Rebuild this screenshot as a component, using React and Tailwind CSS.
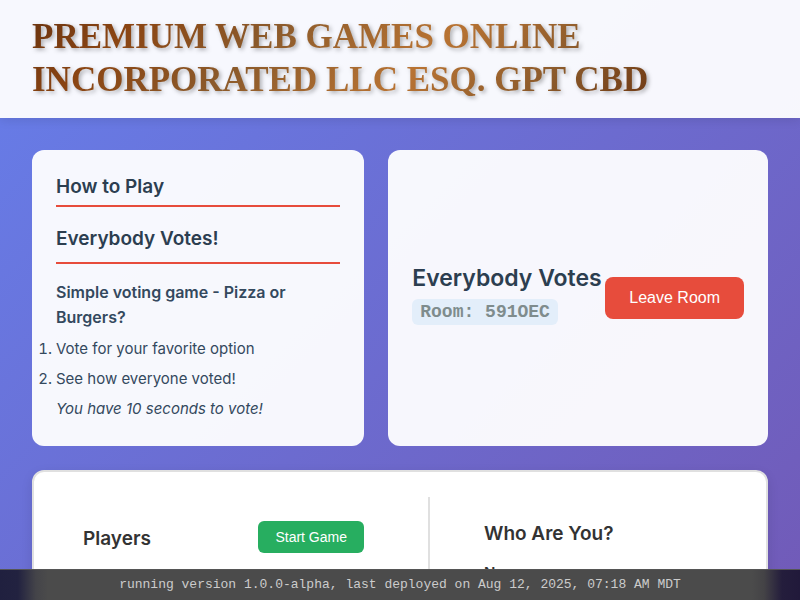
function HowToPlay() {
  return (
    <section className="rounded-xl bg-white/95 px-6 pt-6 pb-[25px] text-[15px] leading-[25px] text-[#34495e]">
      <h2 className="border-b-2 border-[#e74c3c] pb-1.5 text-[19px] leading-[25px] font-semibold text-[#2c3e50]">
        How to Play
      </h2>
      <h3 className="mt-5 border-b-2 border-[#e74c3c] pb-[11px] text-[19px] leading-6 font-semibold text-[#2c3e50]">
        Everybody Votes!
      </h3>
      <p className="mt-4 text-base leading-[25px] font-semibold">Simple voting game - Pizza or Burgers?</p>
      <ol className="mt-1.5 flex list-decimal flex-col gap-[5px]">
        <li>Vote for your favorite option</li>
        <li>See how everyone voted!</li>
      </ol>
      <p className="mt-[5px] italic">You have 10 seconds to vote!</p>
    </section>
  );
}

function RoomHeader() {
  return (
    <section className="flex items-center justify-between rounded-xl bg-white/95 p-6">
      <div className="pb-2">
        <h2 className="text-[23px] leading-[30px] font-semibold whitespace-nowrap text-[#2c3e50]">Everybody Votes</h2>
        <p className="mt-1.5 w-fit rounded-md bg-[#e3eefa] px-2 font-['Liberation_Mono',monospace] text-lg leading-[26px] font-bold whitespace-nowrap text-[#7f8c8d]">
          Room: 591OEC
        </p>
      </div>
      <button
        type="button"
        className="shrink-0 rounded-lg bg-[#e74c3c] px-6 py-[9px] font-['Liberation_Sans',sans-serif] text-base leading-6 text-white"
      >
        Leave Room
      </button>
    </section>
  );
}

function Lobby() {
  return (
    <section className="grid min-h-[700px] grid-cols-[372fr_312fr] rounded-xl border-2 border-[#e0e0e0] bg-white px-6 py-[25px] text-[#333333] shadow-[0_4px_12px_rgba(0,0,0,0.1)]">
      <div className="border-r-2 border-[#e0e0e0] pt-6 pr-16 pl-[25px]">
        <div className="flex items-center justify-between">
          <h2 className="pt-1 text-[19px] leading-7 font-semibold">Players</h2>
          <button
            type="button"
            className="rounded-md bg-[#27ae60] px-[17px] py-1.5 font-['Liberation_Sans',sans-serif] text-sm leading-5 text-white"
          >
            Start Game
          </button>
        </div>
      </div>
      <div className="pt-6 pl-[54px]">
        <h2 className="text-[19px] leading-[26px] font-semibold">Who Are You?</h2>
        <h3 className="mt-3.5 text-[15px] leading-6 font-semibold">Name</h3>
      </div>
    </section>
  );
}

export default function App() {
  return (
    <div className="min-h-screen bg-linear-[135deg,#667eea_0%,#764ba2_100%] font-['Inter','Liberation_Sans',sans-serif]">
      <header className="bg-white/95 px-8 pt-[15px] pb-[17px] shadow-[0_2px_10px_rgba(0,0,0,0.1)]">
        <h1 className="w-fit max-w-[640px] bg-linear-[135deg,#6b3410_0%,#8b4513_15%,#8b5a2b_35%,#b87333_60%,#8b5a2b_80%,#6b3410_100%] bg-clip-text font-['Liberation_Serif',serif] text-[35px] leading-[43px] font-bold text-transparent uppercase drop-shadow-[2px_2px_2px_rgba(0,0,0,0.3)]">
          Premium Web Games Online Incorporated LLC Esq. GPT CBD
        </h1>
      </header>
      <main className="flex flex-col gap-6 p-8">
        <div className="grid grid-cols-[7fr_8fr] gap-6">
          <HowToPlay />
          <RoomHeader />
        </div>
        <Lobby />
      </main>
      <footer className="fixed inset-x-0 bottom-0 z-10 border-t border-[#555555] bg-[linear-gradient(90deg,#20203f_0,#222240_18px,#444449_36px,#4b4b4b_48px,#4b4b4b_calc(100%-48px),#444346_calc(100%-36px),#241d3c_calc(100%-18px),#21193a_100%)] py-[5px] text-center font-['Liberation_Mono',monospace] text-[13px] leading-5 text-[#cccccc]">
        running version 1.0.0-alpha, last deployed on Aug 12, 2025, 07:18 AM MDT
      </footer>
    </div>
  );
}
